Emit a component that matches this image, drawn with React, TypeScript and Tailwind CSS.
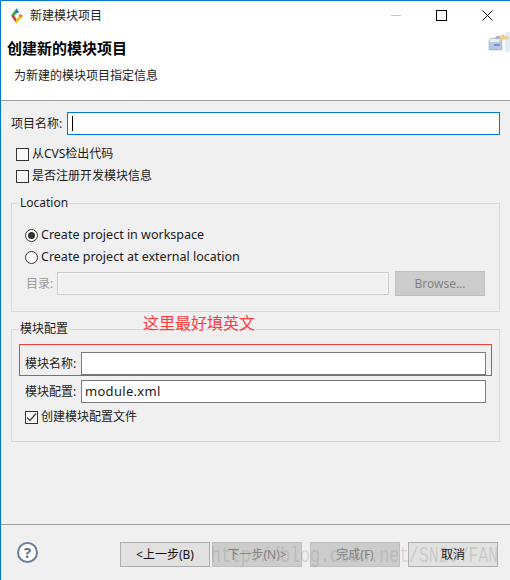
import React from 'react';

const FONT = '"Noto Sans", "Noto Sans CJK SC", sans-serif';

const AppLogo = () => (
  <svg width="14" height="18" viewBox="0 0 14 18">
    <path d="M6.5 1 L9 5.5 L6.5 6.5 L5.5 4.5 Z" fill="#2a6fc9" />
    <path d="M5.5 2.5 L1 8.5 L3.5 10 L7 5.5 Z" fill="#35a84a" />
    <path d="M1.5 9.5 L4 8.5 L7 13 L5.5 15 Z" fill="#d9383a" />
    <path d="M6 17 L13 9 L10 8 L6 12.5 Z" fill="#f0c419" />
    <path d="M9.5 7 L12.5 8.5 L11 10.5 L9 9 Z" fill="#e0702a" />
  </svg>
);

const BannerIcon = () => (
  <svg width="22" height="20" viewBox="0 0 22 20" className="shrink-0 opacity-80">
    <rect x="17" y="0" width="5" height="20" fill="#dce8f6" />
    <path d="M1 7 L12 5 L14 7 L14 18 L1 18 Z" fill="#a3b9e0" stroke="#7f97c6" strokeWidth="0.6" />
    <path d="M1 7 L12 7 L11 10 L2 10 Z" fill="#f6ebc8" />
    <rect x="6" y="12" width="6" height="2" fill="#5a76b3" />
    <path d="M12 4 L15 2 L17 4 L21 5.5 L21 7.5 L16 7.5 L14 9 L12 7 Z" fill="#e9c477" />
    <rect x="8" y="4" width="4" height="3" fill="#8fa2c6" />
  </svg>
);

const WindowControls = () => (
  <div className="ml-auto flex items-center">
    <div className="mr-[35px] h-px w-[10px] bg-[#c4c4c4]" />
    <div className="mr-[35px] size-[11px] border border-black" />
    <svg width="11" height="11" viewBox="0 0 11 11" className="mr-[17px]">
      <path d="M0.5 0.5 L10.5 10.5 M10.5 0.5 L0.5 10.5" stroke="#111" strokeWidth="1" />
    </svg>
  </div>
);

const Checkbox = ({ checked = false, label }: { checked?: boolean; label: string }) => (
  <div className="flex h-[22px] items-center text-[12px] text-[#1a1a1a]">
    <div className="flex size-[13px] items-center justify-center border border-[#333] bg-[#f7f7f7]">
      {checked && (
        <svg width="11" height="11" viewBox="0 0 11 11">
          <path d="M1 5.5 L4 8.5 L10 1.5" fill="none" stroke="#444" strokeWidth="1.3" />
        </svg>
      )}
    </div>
    <span className="ml-[3px]">{label}</span>
  </div>
);

const Radio = ({ checked = false, label }: { checked?: boolean; label: string }) => (
  <div className="flex h-[22px] items-center text-[12.5px] text-[#1a1a1a]">
    <div className="flex size-[13px] items-center justify-center rounded-full border border-[#333] bg-white">
      {checked && <div className="size-[7px] rounded-full bg-[#333]" />}
    </div>
    <span className="ml-[3px]">{label}</span>
  </div>
);

const FooterButton = ({ label, disabled = false }: { label: string; disabled?: boolean }) => (
  <div
    className={`flex h-[25px] w-[90px] items-center justify-center border text-[12px] ${
      disabled
        ? 'border-[#bfbfbf] bg-[#cccccc] text-[#838383]'
        : 'border-[#adadad] bg-[#e1e1e1] text-[#111]'
    }`}
  >
    {label}
  </div>
);

const App = () => {
  return (
    <div
      className="relative flex h-[580px] w-[510px] flex-col overflow-hidden border-t border-l border-[#0078d7] bg-[#f0f0f0]"
      style={{ fontFamily: FONT }}
    >
      {/* title bar */}
      <div className="flex h-[29px] shrink-0 items-center bg-white pl-[9px] text-[12px] text-[#222]">
        <AppLogo />
        <span className="ml-[6px]">新建模块项目</span>
        <WindowControls />
      </div>

      {/* banner */}
      <div className="flex h-[71px] shrink-0 justify-between border-b border-[#a0a0a0] bg-white">
        <div className="pl-[6px]">
          <div className="mt-[7px] text-[15px] leading-[22px] font-bold text-black">创建新的模块项目</div>
          <div className="mt-[7px] pl-[7px] text-[12px] leading-[20px] text-[#222]">为新建的模块项目指定信息</div>
        </div>
        <div className="mt-[1px] pt-px">
          <BannerIcon />
        </div>
      </div>

      {/* form */}
      <div className="flex-1">
        <div className="mt-[11px] flex items-center pr-[10px] pl-[10px]">
          <span className="w-[56px] text-[12px] whitespace-nowrap text-[#222]">项目名称:</span>
          <div className="flex h-[23px] flex-1 items-center border border-[#0078d7] bg-white pl-[4px]">
            <div className="h-[15px] w-px bg-black" />
          </div>
        </div>

        <div className="mt-[8px] pl-[15px]">
          <Checkbox label="从CVS检出代码" />
          <Checkbox label="是否注册开发模块信息" />
        </div>

        <fieldset className="mx-[10px] mt-[8px] h-[117px] min-w-0 border border-[#d9d9d9] pr-[13px] pl-[13px]">
          <legend className="-ml-[6px] px-px text-[12px] leading-[16px] text-[#222]">Location</legend>
          <div className="mt-[13px]">
            <Radio checked label="Create project in workspace" />
            <Radio label="Create project at external location" />
          </div>
          <div className="mt-[3px] flex items-center">
            <span className="w-[32px] pl-[1px] text-[12px] whitespace-nowrap text-[#9a9a9a]">目录:</span>
            <div className="h-[23px] w-[332px] border border-[#cbcbcb] bg-[#f0f0f0] shadow-[inset_0_0_0_1px_#f7f7f7]" />
            <div className="ml-[6px] flex h-[25px] w-[90px] items-center justify-center border border-[#bfbfbf] bg-[#cccccc] text-[12px] text-[#838383]">
              Browse...
            </div>
          </div>
        </fieldset>

        <fieldset className="mx-[10px] mt-[9px] h-[121px] min-w-0 border border-[#d9d9d9] pr-[13px] pl-[13px]">
          <legend className="-ml-[6px] px-px text-[12px] leading-[16px] text-[#222]">模块配置</legend>
          <div className="-mx-[6px] mt-[7px] flex h-[32px] items-end border border-[#f53c3c] pl-[5px]">
            <span className="w-[56px] text-[12px] leading-[22px] whitespace-nowrap text-[#222]">模块名称:</span>
            <div className="h-[23px] w-[405px] border border-[#7a7a7a] bg-white" />
          </div>
          <div className="mt-[4px] flex items-center">
            <span className="w-[56px] text-[12px] whitespace-nowrap text-[#222]">模块配置:</span>
            <div className="flex h-[23px] w-[405px] items-center border border-[#7a7a7a] bg-white pl-[3px] text-[13px] tracking-[0.3px] text-[#1a1a1a]">
              module.xml
            </div>
          </div>
          <div className="mt-[3px]">
            <Checkbox checked label="创建模块配置文件" />
          </div>
        </fieldset>
      </div>

      {/* footer */}
      <div className="flex h-[56px] shrink-0 items-start border-t border-[#a0a0a0] pt-[17px] pl-[16px]">
        <div className="flex size-[21px] items-center justify-center rounded-full border-2 border-[#6a7f9e] bg-white text-[15px] leading-none font-bold text-[#5f7391]">
          ?
        </div>
        <div className="ml-[82px] flex">
          <FooterButton label="<上一步(B)" />
          <div className="ml-[2px]">
            <FooterButton label="下一步(N)>" disabled />
          </div>
          <div className="ml-[8px]">
            <FooterButton label="完成(F)" disabled />
          </div>
          <div className="ml-[8px]">
            <FooterButton label="取消" />
          </div>
        </div>
      </div>

      {/* red note drawn over the screenshot */}
      <div className="absolute top-[312px] left-[142px] text-[16px] leading-[20px] text-[#ff3c3c]">这里最好填英文</div>

      {/* blog watermark */}
      <div
        className="absolute top-[544px] left-[210px] origin-left scale-x-75 text-[22px] leading-[24px] whitespace-nowrap text-[#7f7f7f]/25"
        style={{ fontFamily: '"Liberation Mono", monospace' }}
      >
        http://blog.csdn.net/SN20YFAN
      </div>
    </div>
  );
};

export default App;
